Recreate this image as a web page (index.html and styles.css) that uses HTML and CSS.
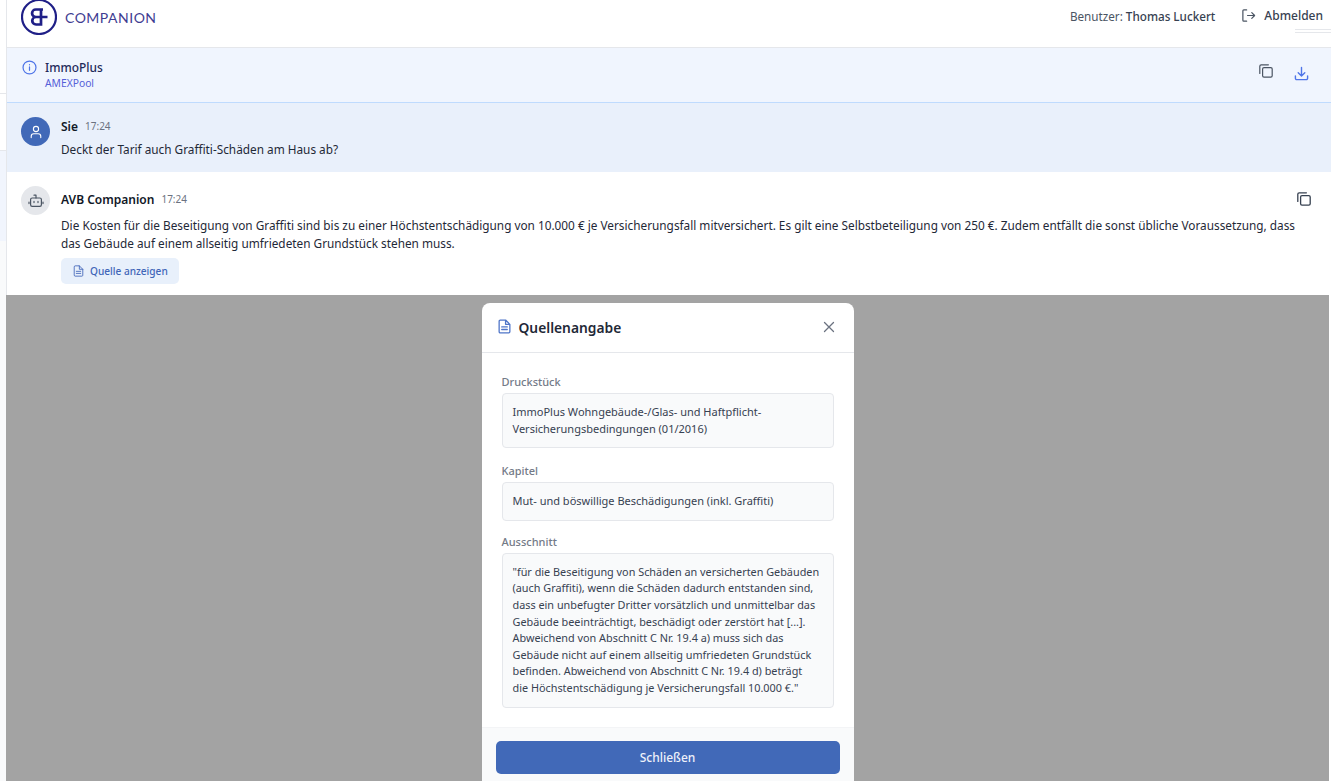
FILE: index.html
```html
<!DOCTYPE html>
<html lang="de">
<head>
    <meta charset="UTF-8">
    <meta name="viewport" content="width=device-width, initial-scale=1.0">
    <title>AVB Companion</title>
    <link rel="stylesheet" href="styles.css">
</head>
<body>
    <aside class="sidebar">
        <div class="side-top"></div>
        <div class="side-mid"></div>
        <div class="side-active"></div>
        <div class="side-rest"></div>
    </aside>

    <div class="main">
        <header class="topbar">
            <div class="brand">
                <svg class="brand-logo" viewBox="0 0 36 36" fill="none" stroke="#1f1f87">
                    <circle cx="18" cy="18" r="17" stroke-width="2.2"/>
                    <path d="M20 10v15.5h-5a3.75 3.75 0 0 1 0-7.5h11.5M18 18h-3.2a3.7 3.7 0 0 1 0-7.5H22" stroke-width="2.7"/>
                </svg>
                <span class="brand-name">COMPANION</span>
            </div>
            <div class="user-area">
                <span class="user">Benutzer: <span class="user-name">Thomas Luckert</span></span>
                <span class="logout">
                    <svg class="icon-logout" viewBox="0 0 16 16" fill="none" stroke="#4b5563" stroke-width="1.3" stroke-linecap="round" stroke-linejoin="round">
                        <path d="M6 2H3a1 1 0 0 0-1 1v10a1 1 0 0 0 1 1h3M7 8h7.5M11.5 5l3 3-3 3"/>
                    </svg>
                    Abmelden
                </span>
            </div>
        </header>
        <div class="resize-mark"></div>

        <section class="infobar">
            <svg class="icon-info" viewBox="0 0 16 16" fill="none" stroke="#4f75e8" stroke-width="1.3" stroke-linecap="round">
                <circle cx="8" cy="8" r="6.9"/>
                <path d="M8 7.4v3.6M8 5v.1"/>
            </svg>
            <div class="info-text">
                <div class="info-title">ImmoPlus</div>
                <div class="info-sub">AMEXPool</div>
            </div>
            <div class="info-actions">
                <svg class="icon-copy" viewBox="0 0 14 14" fill="none" stroke="#4b5563" stroke-width="1.2" stroke-linejoin="round" stroke-linecap="round">
                    <rect x="3.6" y="3.6" width="9.6" height="9.6" rx="1.4"/>
                    <path d="M.8 9.4V2.2A1.4 1.4 0 0 1 2.2.8h7.2"/>
                </svg>
                <svg class="icon-download" viewBox="0 0 16 16" fill="none" stroke="#4f75e8" stroke-width="1.5" stroke-linecap="round" stroke-linejoin="round">
                    <path d="M8 1.5v9M4.5 7.2 8 10.6l3.5-3.4M1.5 10.5v2.6a1.4 1.4 0 0 0 1.4 1.4h10.2a1.4 1.4 0 0 0 1.4-1.4v-2.6"/>
                </svg>
            </div>
        </section>

        <section class="msg msg-user">
            <div class="avatar avatar-user">
                <svg viewBox="0 0 14 14" fill="none" stroke="#fff" stroke-width="1.1" stroke-linecap="round">
                    <circle cx="7" cy="4" r="2.6"/>
                    <path d="M2.2 12.6v-1.2a2.6 2.6 0 0 1 2.6-2.6h4.4a2.6 2.6 0 0 1 2.6 2.6v1.2"/>
                </svg>
            </div>
            <div class="msg-body">
                <div class="msg-head"><span class="msg-name">Sie</span><span class="msg-time">17:24</span></div>
                <p class="msg-text">Deckt der Tarif auch Graffiti-Schäden am Haus ab?</p>
            </div>
        </section>

        <section class="msg msg-bot">
            <div class="avatar avatar-bot">
                <svg viewBox="0 0 16 16" fill="none" stroke="#4b5563" stroke-width="1.2" stroke-linecap="round" stroke-linejoin="round">
                    <rect x="2.6" y="5" width="10.8" height="8.4" rx="1.6"/>
                    <path d="M8 5V2.2M6 2.2h2M1 9v1.6M15 9v1.6M6 8.4v1.2M10 8.4v1.2"/>
                </svg>
            </div>
            <div class="msg-body">
                <div class="msg-head"><span class="msg-name">AVB Companion</span><span class="msg-time">17:24</span></div>
                <p class="msg-text">Die Kosten für die Beseitigung von Graffiti sind bis zu einer Höchstentschädigung von 10.000 € je Versicherungsfall mitversichert. Es gilt eine Selbstbeteiligung von 250 €. Zudem entfällt die sonst übliche Voraussetzung, dass das Gebäude auf einem allseitig umfriedeten Grundstück stehen muss.</p>
                <button class="source-btn">
                    <svg class="icon-doc" viewBox="0 0 12 14" fill="none" stroke="#4065b8" stroke-width="1" stroke-linejoin="round" stroke-linecap="round">
                        <path d="M1 2a1 1 0 0 1 1-1h5l4 4v7a1 1 0 0 1-1 1H2a1 1 0 0 1-1-1zM7 1v4h4M3.4 7.4h5.2M3.4 9.8h5.2"/>
                    </svg>
                    Quelle anzeigen
                </button>
            </div>
            <svg class="icon-copy icon-copy-bot" viewBox="0 0 14 14" fill="none" stroke="#374151" stroke-width="1.3" stroke-linejoin="round" stroke-linecap="round">
                <rect x="3.6" y="3.6" width="9.6" height="9.6" rx="1.4"/>
                <path d="M.8 9.4V2.2A1.4 1.4 0 0 1 2.2.8h7.2"/>
            </svg>
        </section>

        <div class="overlay">
            <div class="modal">
                <div class="modal-head">
                    <svg class="modal-doc" viewBox="0 0 12 14" fill="none" stroke="#4f75c8" stroke-width="1.2" stroke-linejoin="round" stroke-linecap="round">
                        <path d="M1 2a1 1 0 0 1 1-1h5l4 4v7a1 1 0 0 1-1 1H2a1 1 0 0 1-1-1zM7 1v4h4M3.4 7.4h5.2M3.4 9.8h5.2"/>
                    </svg>
                    <h2 class="modal-title">Quellenangabe</h2>
                    <svg class="modal-close" viewBox="0 0 12 12" fill="none" stroke="#6b7280" stroke-width="1.3" stroke-linecap="round">
                        <path d="M1.5 1.5l9 9M10.5 1.5l-9 9"/>
                    </svg>
                </div>
                <div class="modal-body">
                    <div class="field field-first">
                        <div class="field-label">Druckstück</div>
                        <div class="field-box">ImmoPlus Wohngebäude-/Glas- und Haftpflicht-<br>Versicherungsbedingungen (01/2016)</div>
                    </div>
                    <div class="field">
                        <div class="field-label">Kapitel</div>
                        <div class="field-box">Mut- und böswillige Beschädigungen (inkl. Graffiti)</div>
                    </div>
                    <div class="field">
                        <div class="field-label">Ausschnitt</div>
                        <div class="field-box field-box-long">"für die Beseitigung von Schäden an versicherten Gebäuden (auch Graffiti), wenn die Schäden dadurch entstanden sind, dass ein unbefugter Dritter vorsätzlich und unmittelbar das Gebäude beeinträchtigt, beschädigt oder zerstört hat [...]. Abweichend von Abschnitt C Nr. 19.4 a) muss sich das Gebäude nicht auf einem allseitig umfriedeten Grundstück befinden. Abweichend von Abschnitt C Nr. 19.4 d) beträgt<br>die Höchstentschädigung je Versicherungsfall 10.000 €."</div>
                    </div>
                </div>
                <div class="modal-foot">
                    <button class="close-btn">Schließen</button>
                </div>
            </div>
        </div>
    </div>
</body>
</html>
```

FILE: styles.css
```css
* {
    box-sizing: border-box;
}

body {
    margin: 0;
    height: 100vh;
    overflow: hidden;
    display: flex;
    background: #fff;
    font-family: "Noto Sans", sans-serif;
    font-size: 12px;
    color: #1f2937;
}

/* sliver of the sidebar that is left visible */
.sidebar {
    width: 7px;
    flex-shrink: 0;
    display: flex;
    flex-direction: column;
    border-right: 1px solid #e5e7eb;
}

.side-top {
    height: 94px;
    border-bottom: 1px solid #e5e7eb;
}

.side-mid {
    height: 57px;
    border-bottom: 1px solid #e5e7eb;
}

.side-active {
    height: 90px;
    background: #f1f5fd;
}

.side-rest {
    flex: 1;
    background: #f9fafb;
}

.main {
    flex: 1;
    min-width: 0;
    display: flex;
    flex-direction: column;
    position: relative;
}

.topbar {
    height: 48px;
    flex-shrink: 0;
    display: flex;
    justify-content: space-between;
    align-items: flex-start;
    padding: 0 8px 0 14px;
    border-bottom: 1px solid #e5e7eb;
}

.brand {
    display: flex;
    align-items: center;
    gap: 8px;
    margin-top: -1px;
}

.brand-logo {
    width: 36px;
    height: 36px;
}

.brand-name {
    font-family: Lato, sans-serif;
    font-size: 14px;
    letter-spacing: 0.5px;
    color: #3f3d92;
}

.user-area {
    display: flex;
    align-items: center;
    gap: 26px;
    margin-top: 7px;
    color: #4b5563;
}

.user {
    font-size: 11.7px;
}

.user-name {
    font-weight: 500;
    color: #374151;
}

.logout {
    display: flex;
    align-items: center;
    gap: 8px;
    font-weight: 500;
    color: #374151;
}

.icon-logout {
    width: 15px;
    height: 15px;
}

.resize-mark {
    position: absolute;
    top: 29px;
    right: 0;
    width: 36px;
    height: 4px;
    border-top: 1px solid #e5e7eb;
    border-bottom: 1px solid #e5e7eb;
}

.infobar {
    height: 55px;
    flex-shrink: 0;
    display: flex;
    align-items: center;
    padding: 0 22px 0 15px;
    background: #f0f5fe;
    border-bottom: 1px solid #bfdbfe;
}

.icon-info {
    width: 15px;
    height: 15px;
    margin: -16px 8px 0 0;
}

.info-title {
    font-size: 11.9px;
    font-weight: 500;
    line-height: 17px;
    color: #1e2a5a;
}

.info-sub {
    font-size: 10.3px;
    line-height: 15px;
    color: #5560d8;
}

.info-actions {
    margin-left: auto;
    display: flex;
    align-items: center;
    gap: 21px;
    margin-top: -9px;
}

.icon-copy {
    width: 14px;
    height: 14px;
}

.icon-download {
    width: 15px;
    height: 15px;
    margin-top: 5px;
}

.msg {
    display: flex;
    gap: 11px;
    padding: 14px 20px 0 14px;
    flex-shrink: 0;
}

.msg-user {
    height: 69px;
    background: #e9f0fb;
}

.msg-bot {
    height: 123px;
    position: relative;
}

.avatar {
    width: 29px;
    height: 29px;
    flex-shrink: 0;
    border-radius: 50%;
    display: flex;
    align-items: center;
    justify-content: center;
}

.avatar-user {
    background: #4169b8;
}

.avatar-user svg {
    width: 14px;
    height: 14px;
}

.avatar-bot {
    background: #e5e7eb;
}

.avatar-bot svg {
    width: 16px;
    height: 16px;
}

.msg-body {
    flex: 1;
    min-width: 0;
}

.msg-head {
    display: flex;
    align-items: center;
    gap: 7px;
    height: 18px;
}

.msg-bot .msg-head {
    margin-top: 4px;
}

.msg-name {
    font-weight: 600;
    color: #111827;
}

.msg-time {
    font-size: 10px;
    color: #6b7280;
}

.msg-text {
    margin: 5px 0 0;
    font-size: 11.8px;
    line-height: 18px;
    color: #1f2937;
}

.msg-bot .msg-text {
    margin-top: 8px;
}

.source-btn {
    display: inline-flex;
    align-items: center;
    gap: 6px;
    height: 26px;
    margin-top: 6px;
    padding: 0 11px 0 12px;
    border: none;
    border-radius: 5px;
    background: #e8f0fb;
    font-family: inherit;
    font-size: 10.1px;
    font-weight: 500;
    color: #4065b8;
}

.icon-doc {
    width: 11px;
    height: 12px;
}

/* the answer text runs underneath this one */
.icon-copy-bot {
    position: absolute;
    top: 20px;
    right: 20px;
}

.overlay {
    flex: 1;
    min-height: 0;
    overflow: hidden;
    display: flex;
    justify-content: center;
    padding-top: 8px;
    margin: 0 2px 0 -1px;
    background: #a3a3a3;
}

.modal {
    width: 372px;
    height: 500px;
    flex-shrink: 0;
    background: #fff;
    border-radius: 8px;
}

.modal-head {
    height: 50px;
    display: flex;
    align-items: center;
    gap: 8px;
    padding: 0 19px 0 16px;
    border-bottom: 1px solid #e5e7eb;
}

.modal-doc {
    width: 13px;
    height: 15px;
    margin-top: -3px;
}

.modal-title {
    margin: 0;
    flex: 1;
    font-size: 13.8px;
    font-weight: 600;
    color: #1f2937;
}

.modal-close {
    width: 12px;
    height: 12px;
    margin-top: -2px;
}

.modal-body {
    height: 374px;
    padding: 20px 20px 0;
}

.field {
    margin-bottom: 12px;
}

.field-first {
    margin-bottom: 14px;
}

.field-label {
    font-size: 11px;
    font-weight: 500;
    line-height: 18px;
    margin-bottom: 2px;
    color: #737a87;
}

.field-box {
    padding: 10px;
    background: #f9fafb;
    border: 1px solid #e5e7eb;
    border-radius: 4px;
    font-size: 11px;
    line-height: 16.6px;
    color: #374151;
}

.field-box-long {
    padding-right: 6px;
    font-size: 10.85px;
}

.modal-foot {
    padding: 13px 14px;
    height: 75px;
    background: #f9fafb;
    border-top: 1px solid #f3f4f6;
}

.close-btn {
    display: block;
    width: 100%;
    height: 33px;
    border: none;
    border-radius: 5px;
    background: #4169b8;
    font-family: inherit;
    font-size: 12px;
    font-weight: 500;
    color: #eef1fa;
}
```
